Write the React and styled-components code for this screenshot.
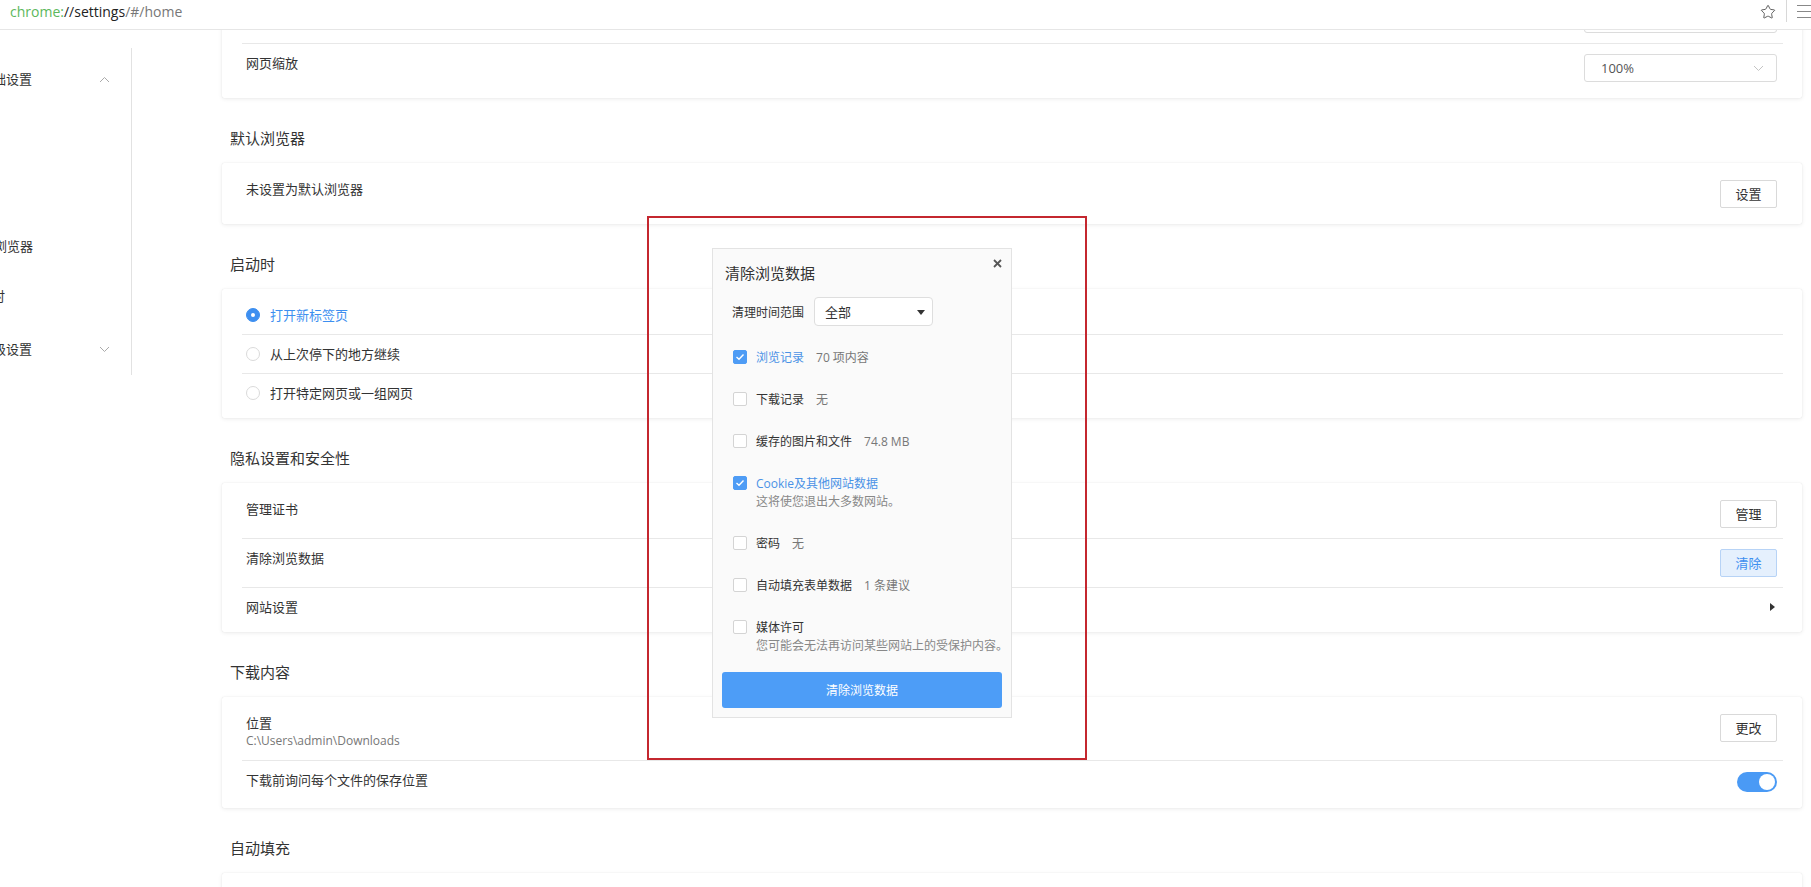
import React from 'react'
import styled, { createGlobalStyle } from 'styled-components'
import { Star } from 'lucide-react'

const GlobalStyle = createGlobalStyle`
  html, body {
    margin: 0;
    padding: 0;
    background: #fff;
  }
  body {
    font-family: "Open Sans", "Noto Sans CJK SC", sans-serif;
    color: #333;
    overflow: hidden;
  }
  * {
    box-sizing: border-box;
  }
`

const Page = styled.div`
  width: 1811px;
  height: 887px;
  position: relative;
  overflow: hidden;
  display: flex;
  flex-direction: column;
`

const AddressBar = styled.header`
  height: 30px;
  flex-shrink: 0;
  display: flex;
  align-items: flex-start;
  padding: 2px 0 0 10px;
  border-bottom: 1px solid #e6e6e6;
  background: #fff;
`

const Url = styled.div`
  font-size: 14px;
  line-height: 20px;
  color: #777;
  white-space: nowrap;
`

const Scheme = styled.span`
  color: #5cb85c;
`

const Host = styled.span`
  color: #222;
`

const Tools = styled.div`
  margin-left: auto;
  display: flex;
  align-items: flex-start;
  color: #555;
`

const StarWrap = styled.div`
  width: 16px;
  height: 20px;
  display: flex;
  align-items: center;
  margin-right: 10px;
`

const ToolDivider = styled.div`
  width: 1px;
  height: 22px;
  margin-top: -2px;
  background: #d8d8d8;
  margin-right: 10px;
`

const Body = styled.div`
  flex: 1;
  min-height: 0;
  display: flex;
  overflow: hidden;
`

const Sidebar = styled.nav`
  width: 132px;
  flex-shrink: 0;
  margin-top: 18px;
  height: 327px;
  padding-top: 21px;
  border-right: 1px solid #e2e2e2;
  overflow: hidden;
`

const NavItem = styled.div`
  display: flex;
  align-items: center;
  height: 20px;
  margin-top: ${p => p.$gap || 0}px;
  padding-right: 21px;
  font-size: 13px;
  line-height: 20px;
  color: #333;
  white-space: nowrap;
`

const NavLabel = styled.span`
  margin-left: ${p => p.$shift}px;
`

const NavChevron = styled.span`
  margin-left: auto;
  flex-shrink: 0;
  display: flex;
`

const Main = styled.main`
  width: 1580px;
  flex-shrink: 0;
  margin-left: 90px;
  margin-top: -42px;
`

const SectionTitle = styled.h2`
  margin: 0 0 15px;
  padding: 30px 0 0 8px;
  font-size: 15px;
  line-height: 20px;
  font-weight: normal;
  color: #333;
`

const Card = styled.section`
  background: #fff;
  border-radius: 2px;
  padding: 7px 19px 6px 20px;
  box-shadow: 0 0 1px rgba(0, 0, 0, 0.14), 0 1px 4px rgba(0, 0, 0, 0.08);
`

const Row = styled.div`
  display: flex;
  align-items: flex-start;
  padding: 10px 6px 10px 4px;
  & + & {
    border-top: 1px solid #e8e8e8;
  }
`

const RowText = styled.div`
  flex: 1;
  display: flex;
  flex-direction: column;
`

const Label = styled.div`
  display: flex;
  align-items: center;
  font-size: 13px;
  line-height: 18px;
  color: ${p => (p.$active ? '#3d8ff0' : '#333')};
`

const SubLabel = styled.div`
  font-size: 12px;
  line-height: 18px;
  color: #777;
`

const Radio = styled.span`
  width: 14px;
  height: 14px;
  border-radius: 50%;
  margin-right: 10px;
  flex-shrink: 0;
  display: flex;
  align-items: center;
  justify-content: center;
  background: ${p => (p.$checked ? '#3d8ff0' : '#fff')};
  border: 1px solid ${p => (p.$checked ? '#3d8ff0' : '#dadada')};
  &::after {
    content: '';
    width: 4px;
    height: 4px;
    border-radius: 50%;
    background: ${p => (p.$checked ? '#fff' : 'transparent')};
  }
`

const Button = styled.button`
  width: 57px;
  height: 28px;
  flex-shrink: 0;
  padding: 0;
  font-family: inherit;
  font-size: 13px;
  line-height: 26px;
  border-radius: 2px;
  border: 1px solid ${p => (p.$primary ? '#b7d3f6' : '#d9d9d9')};
  background: ${p => (p.$primary ? '#e5f0fd' : '#fff')};
  color: ${p => (p.$primary ? '#3d8ff0' : '#333')};
`

const Select = styled.div`
  width: 193px;
  height: 28px;
  flex-shrink: 0;
  display: flex;
  align-items: center;
  padding: 0 12px 0 16px;
  border: 1px solid #dcdcdc;
  border-radius: 3px;
  font-size: 13px;
  color: #555;
  svg {
    margin-left: auto;
  }
`

const Caret = styled.span`
  width: 0;
  height: 0;
  margin-top: 1px;
  border-top: 5px solid #333;
  border-left: 4px solid transparent;
  border-right: 4px solid transparent;
`

const Toggle = styled.span`
  width: 40px;
  height: 20px;
  margin-top: 1px;
  flex-shrink: 0;
  border-radius: 10px;
  background: #4a9af5;
  display: flex;
  align-items: center;
  justify-content: flex-end;
  padding: 2px;
  &::after {
    content: '';
    width: 16px;
    height: 16px;
    border-radius: 50%;
    background: #fff;
  }
`

const Arrow = styled.span`
  width: 0;
  height: 0;
  margin: 5px 2px 0 0;
  border-left: 5px solid #333;
  border-top: 4px solid transparent;
  border-bottom: 4px solid transparent;
`

/* overlays: the dialog and the red annotation frame lie over the page */

const Highlight = styled.div`
  position: absolute;
  left: 647px;
  top: 216px;
  width: 440px;
  height: 544px;
  border: 2px solid #c4272f;
  pointer-events: none;
`

const Dialog = styled.div`
  position: absolute;
  left: 712px;
  top: 248px;
  width: 300px;
  height: 470px;
  padding: 0 9px;
  background: #fafafa;
  border: 1px solid #e3e3e3;
  display: flex;
  flex-direction: column;
`

const DialogTitle = styled.div`
  margin-top: 14px;
  padding-left: 3px;
  font-size: 15px;
  line-height: 20px;
  color: #333;
`

const Close = styled.svg`
  position: absolute;
  top: 10px;
  right: 9px;
`

const RangeRow = styled.div`
  margin-top: 14px;
  padding-left: 10px;
  display: flex;
  align-items: center;
  font-size: 12px;
  color: #333;
`

const RangeSelect = styled.div`
  width: 119px;
  height: 29px;
  margin-left: 10px;
  display: flex;
  align-items: center;
  justify-content: space-between;
  padding: 0 7px 0 10px;
  background: #fff;
  border: 1px solid #dedede;
  border-radius: 4px;
  font-size: 13px;
`

const Options = styled.div`
  margin-top: 10px;
  padding-left: 11px;
`

const Option = styled.div`
  padding: 12px 0;
`

const OptionLine = styled.div`
  display: flex;
  align-items: center;
  height: 18px;
  font-size: 12px;
  white-space: nowrap;
`

const Box = styled.span`
  width: 14px;
  height: 14px;
  margin-right: 9px;
  flex-shrink: 0;
  border-radius: 2px;
  display: flex;
  align-items: center;
  justify-content: center;
  background: ${p => (p.$checked ? '#4e9cf5' : '#fff')};
  border: 1px solid ${p => (p.$checked ? '#4e9cf5' : '#d4d4d4')};
`

const OptionName = styled.span`
  color: ${p => (p.$checked ? '#4a92e6' : '#333')};
`

const OptionValue = styled.span`
  margin-left: 12px;
  color: #777;
`

const OptionNote = styled.div`
  margin-top: 2px;
  padding-left: 23px;
  font-size: 12px;
  line-height: 16px;
  color: #888;
  white-space: nowrap;
`

const ClearButton = styled.button`
  margin-top: 6px;
  height: 36px;
  width: 100%;
  border: none;
  border-radius: 3px;
  background: #4d9df7;
  color: #fff;
  font-family: inherit;
  font-size: 12px;
`

const Chevron = ({ up, color = '#aaa' }) => (
  <svg width="11" height="7" viewBox="0 0 11 7">
    <polyline
      points={up ? '1,6 5.5,1.5 10,6' : '1,1 5.5,5.5 10,1'}
      fill="none"
      stroke={color}
      strokeWidth="1"
    />
  </svg>
)

const Check = () => (
  <svg width="10" height="8" viewBox="0 0 10 8">
    <polyline points="1.5,4 4,6.3 8.5,1.5" fill="none" stroke="#fff" strokeWidth="1.4" />
  </svg>
)

const Hamburger = () => (
  <svg width="14" height="20" viewBox="0 0 14 20">
    <line x1="0" y1="3.5" x2="14" y2="3.5" stroke="#888" strokeWidth="1" />
    <line x1="0" y1="9.5" x2="14" y2="9.5" stroke="#888" strokeWidth="1" />
    <line x1="0" y1="15.5" x2="14" y2="15.5" stroke="#888" strokeWidth="1" />
  </svg>
)

const options = [
  { name: '浏览记录', value: '70 项内容', checked: true },
  { name: '下载记录', value: '无' },
  { name: '缓存的图片和文件', value: '74.8 MB' },
  { name: 'Cookie及其他网站数据', note: '这将使您退出大多数网站。', checked: true },
  { name: '密码', value: '无' },
  { name: '自动填充表单数据', value: '1 条建议' },
  { name: '媒体许可', note: '您可能会无法再访问某些网站上的受保护内容。' },
]

const startup = ['打开新标签页', '从上次停下的地方继续', '打开特定网页或一组网页']

export default function App() {
  return (
    <Page>
      <GlobalStyle />
      <AddressBar>
        <Url>
          <Scheme>chrome:</Scheme>
          <Host>//settings</Host>/#/home
        </Url>
        <Tools>
          <StarWrap>
            <Star size={16} strokeWidth={1.4} />
          </StarWrap>
          <ToolDivider />
          <Hamburger />
        </Tools>
      </AddressBar>

      <Body>
        <Sidebar>
          <NavItem>
            <NavLabel $shift={-20}>基础设置</NavLabel>
            <NavChevron><Chevron up /></NavChevron>
          </NavItem>
          <NavItem $gap={147}>
            <NavLabel $shift={-32}>默认浏览器</NavLabel>
          </NavItem>
          <NavItem $gap={30}>
            <NavLabel $shift={-34}>启动时</NavLabel>
          </NavItem>
          <NavItem $gap={33}>
            <NavLabel $shift={-20}>高级设置</NavLabel>
            <NavChevron><Chevron /></NavChevron>
          </NavItem>
        </Sidebar>

        <Main>
          <Card>
            <Row>
              <RowText><Label>字体大小</Label></RowText>
              <Select>中（推荐）<Chevron color="#c4c4c4" /></Select>
            </Row>
            <Row>
              <RowText><Label>网页缩放</Label></RowText>
              <Select>100%<Chevron color="#c4c4c4" /></Select>
            </Row>
          </Card>

          <SectionTitle>默认浏览器</SectionTitle>
          <Card>
            <Row>
              <RowText><Label>未设置为默认浏览器</Label></RowText>
              <Button>设置</Button>
            </Row>
          </Card>

          <SectionTitle>启动时</SectionTitle>
          <Card>
            {startup.map((text, i) => (
              <Row key={text}>
                <RowText>
                  <Label $active={i === 0}>
                    <Radio $checked={i === 0} />
                    {text}
                  </Label>
                </RowText>
              </Row>
            ))}
          </Card>

          <SectionTitle>隐私设置和安全性</SectionTitle>
          <Card>
            <Row>
              <RowText><Label>管理证书</Label></RowText>
              <Button>管理</Button>
            </Row>
            <Row>
              <RowText><Label>清除浏览数据</Label></RowText>
              <Button $primary>清除</Button>
            </Row>
            <Row>
              <RowText><Label>网站设置</Label></RowText>
              <Arrow />
            </Row>
          </Card>

          <SectionTitle>下载内容</SectionTitle>
          <Card>
            <Row>
              <RowText>
                <Label>位置</Label>
                <SubLabel>C:\Users\admin\Downloads</SubLabel>
              </RowText>
              <Button>更改</Button>
            </Row>
            <Row>
              <RowText><Label>下载前询问每个文件的保存位置</Label></RowText>
              <Toggle />
            </Row>
          </Card>

          <SectionTitle>自动填充</SectionTitle>
          <Card>
            <Row>
              <RowText><Label>密码</Label></RowText>
              <Arrow />
            </Row>
          </Card>
        </Main>
      </Body>

      <Highlight />

      <Dialog>
        <DialogTitle>清除浏览数据</DialogTitle>
        <Close width="9" height="9" viewBox="0 0 9 9">
          <line x1="1" y1="1" x2="8" y2="8" stroke="#555" strokeWidth="1.8" />
          <line x1="8" y1="1" x2="1" y2="8" stroke="#555" strokeWidth="1.8" />
        </Close>
        <RangeRow>
          清理时间范围
          <RangeSelect>
            全部
            <Caret />
          </RangeSelect>
        </RangeRow>
        <Options>
          {options.map(o => (
            <Option key={o.name}>
              <OptionLine>
                <Box $checked={o.checked}>{o.checked && <Check />}</Box>
                <OptionName $checked={o.checked}>{o.name}</OptionName>
                {o.value && <OptionValue>{o.value}</OptionValue>}
              </OptionLine>
              {o.note && <OptionNote>{o.note}</OptionNote>}
            </Option>
          ))}
        </Options>
        <ClearButton>清除浏览数据</ClearButton>
      </Dialog>
    </Page>
  )
}
